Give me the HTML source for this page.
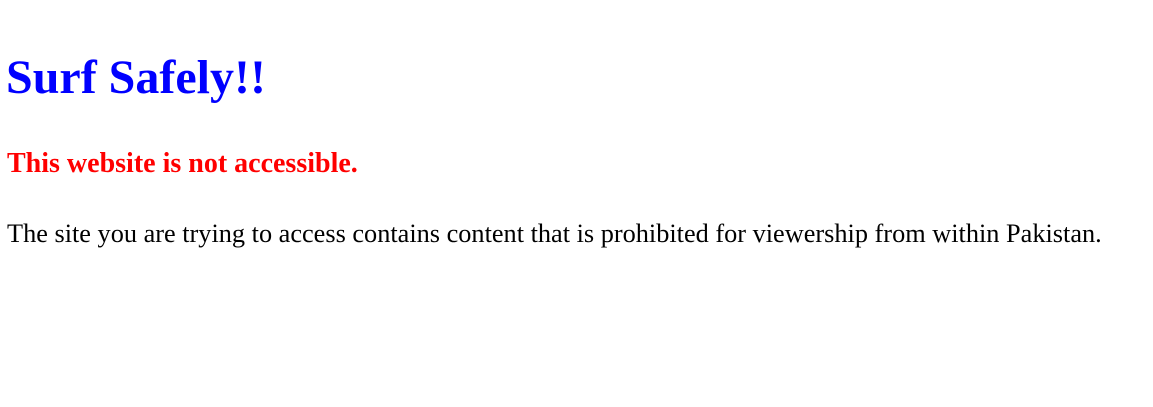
<!DOCTYPE html>
<html><head><meta charset="utf-8"><style>
body{margin:0;background:#fff;width:1153px;height:407px;overflow:hidden;font-family:"Liberation Serif",serif;}
div{position:absolute;left:7px;white-space:nowrap;line-height:normal;}
#a{top:50px;font-size:48px;font-weight:bold;color:#0000ff;left:6px;}
#b{top:148px;font-size:28px;font-weight:bold;color:#ff0000;}
#c{top:219px;font-size:26.3px;color:#000;}
</style></head><body>
<div id="a">Surf Safely!!</div>
<div id="b">This website is not accessible.</div>
<div id="c">The site you are trying to access contains content that is prohibited for viewership from within Pakistan.</div>
</body></html>
